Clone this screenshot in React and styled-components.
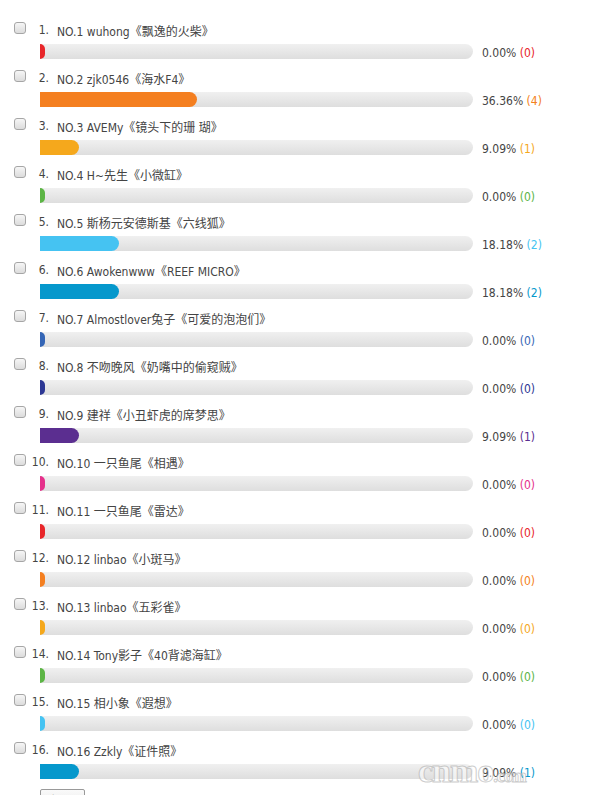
import styled, { createGlobalStyle } from "styled-components";

const GlobalStyle = createGlobalStyle`
  html, body {
    margin: 0;
    padding: 0;
    background: #fff;
  }
  body {
    font-family: "DejaVu Sans Condensed", "Liberation Sans", "Noto Sans CJK SC", sans-serif;
    font-size: 12px;
    color: #333;
  }
`;

const Page = styled.div`
  position: relative;
  width: 594px;
  height: 795px;
  overflow: hidden;
`;

const List = styled.ul`
  list-style: none;
  margin: 0;
  padding: 18px 0 0 0;
`;

const Item = styled.li`
  display: grid;
  grid-template-columns: 40px 1fr;
  grid-template-rows: 24px 24px;
`;

const Check = styled.input.attrs({ type: "checkbox" })`
  appearance: none;
  -webkit-appearance: none;
  grid-row: 1;
  grid-column: 1;
  width: 12px;
  height: 12px;
  margin: 4px 0 0 14px;
  border: 1px solid #a6a6a6;
  border-radius: 3px;
  background: linear-gradient(#f6f6f6, #dcdcdc);
  box-sizing: border-box;
`;

const Label = styled.div`
  grid-row: 1;
  grid-column: 2;
  display: flex;
  align-items: center;
  margin-left: -10px;
  color: #444;
  white-space: nowrap;
`;

const Num = styled.span`
  display: inline-block;
  width: 19px;
  margin-right: 8px;
  text-align: right;
`;

const BarRow = styled.div`
  grid-row: 2;
  grid-column: 2;
  display: flex;
  align-items: flex-start;
`;

const Track = styled.div`
  width: 433px;
  height: 15px;
  margin-top: 2px;
  border-radius: 0 8px 8px 0;
  background: linear-gradient(#f0f0f0, #dedede);
  overflow: hidden;
`;

const Fill = styled.div`
  height: 100%;
  min-width: 5px;
  border-radius: 0 8px 8px 0;
  background: ${(p) => p.$color};
`;

const Stat = styled.span`
  margin: 3px 0 0 9px;
  line-height: 16px;
  color: #444;
  white-space: nowrap;

  b {
    font-weight: normal;
    color: ${(p) => p.$color};
  }
`;

const Submit = styled.button`
  display: block;
  margin: 3px 0 0 40px;
  width: 45px;
  height: 22px;
  padding: 0;
  border: 1px solid #999;
  border-radius: 2px;
  background: linear-gradient(#fafafa, #e6e6e6);
  font: inherit;
  color: #333;
`;

const Watermark = styled.div`
  position: absolute;
  left: 418px;
  top: 752px;
  font-family: "Liberation Serif", serif;
  font-weight: bold;
  font-size: 34px;
  letter-spacing: -1px;
  color: rgba(255, 255, 255, 0.55);
  -webkit-text-stroke: 1px rgba(170, 170, 170, 0.6);
  pointer-events: none;

  span {
    font-size: 18px;
  }
`;

const RED = "#e8262a";
const ORANGE = "#f47f20";
const AMBER = "#f5a81c";
const GREEN = "#5cb545";
const SKY = "#45c3f2";
const BLUE = "#0598cc";

const rows = [
  { t: "NO.1 wuhong《飘逸的火柴》", pct: 0, n: 0, c: RED },
  { t: "NO.2 zjk0546《海水F4》", pct: 36.36, n: 4, c: ORANGE },
  { t: "NO.3 AVEMy《镜头下的珊 瑚》", pct: 9.09, n: 1, c: AMBER },
  { t: "NO.4 H~先生《小微缸》", pct: 0, n: 0, c: GREEN },
  { t: "NO.5 斯杨元安德斯基《六线狐》", pct: 18.18, n: 2, c: SKY },
  { t: "NO.6 Awokenwww《REEF MICRO》", pct: 18.18, n: 2, c: BLUE },
  { t: "NO.7 Almostlover兔子《可爱的泡泡们》", pct: 0, n: 0, c: "#3566b6" },
  { t: "NO.8 不吻晚风《奶嘴中的偷窥贼》", pct: 0, n: 0, c: "#2c3794" },
  { t: "NO.9 建祥《小丑虾虎的席梦思》", pct: 9.09, n: 1, c: "#5b2e90" },
  { t: "NO.10 一只鱼尾《相遇》", pct: 0, n: 0, c: "#e5318b" },
  { t: "NO.11 一只鱼尾《雷达》", pct: 0, n: 0, c: RED },
  { t: "NO.12 linbao《小斑马》", pct: 0, n: 0, c: ORANGE },
  { t: "NO.13 linbao《五彩雀》", pct: 0, n: 0, c: AMBER },
  { t: "NO.14 Tony影子《40背滤海缸》", pct: 0, n: 0, c: GREEN },
  { t: "NO.15 相小象《遐想》", pct: 0, n: 0, c: SKY },
  { t: "NO.16 Zzkly《证件照》", pct: 9.09, n: 1, c: BLUE },
];

export default function App() {
  return (
    <Page>
      <GlobalStyle />
      <List>
        {rows.map((r, i) => (
          <Item key={i}>
            <Check />
            <Label>
              <Num>{i + 1}.</Num>
              {r.t}
            </Label>
            <BarRow>
              <Track>
                <Fill $color={r.c} style={{ width: `${r.pct}%` }} />
              </Track>
              <Stat $color={r.c}>
                {r.pct.toFixed(2)}% <b>({r.n})</b>
              </Stat>
            </BarRow>
          </Item>
        ))}
      </List>
      <Submit>投票</Submit>
      <Watermark>
        cnmo<span>.com</span>
      </Watermark>
    </Page>
  );
}
